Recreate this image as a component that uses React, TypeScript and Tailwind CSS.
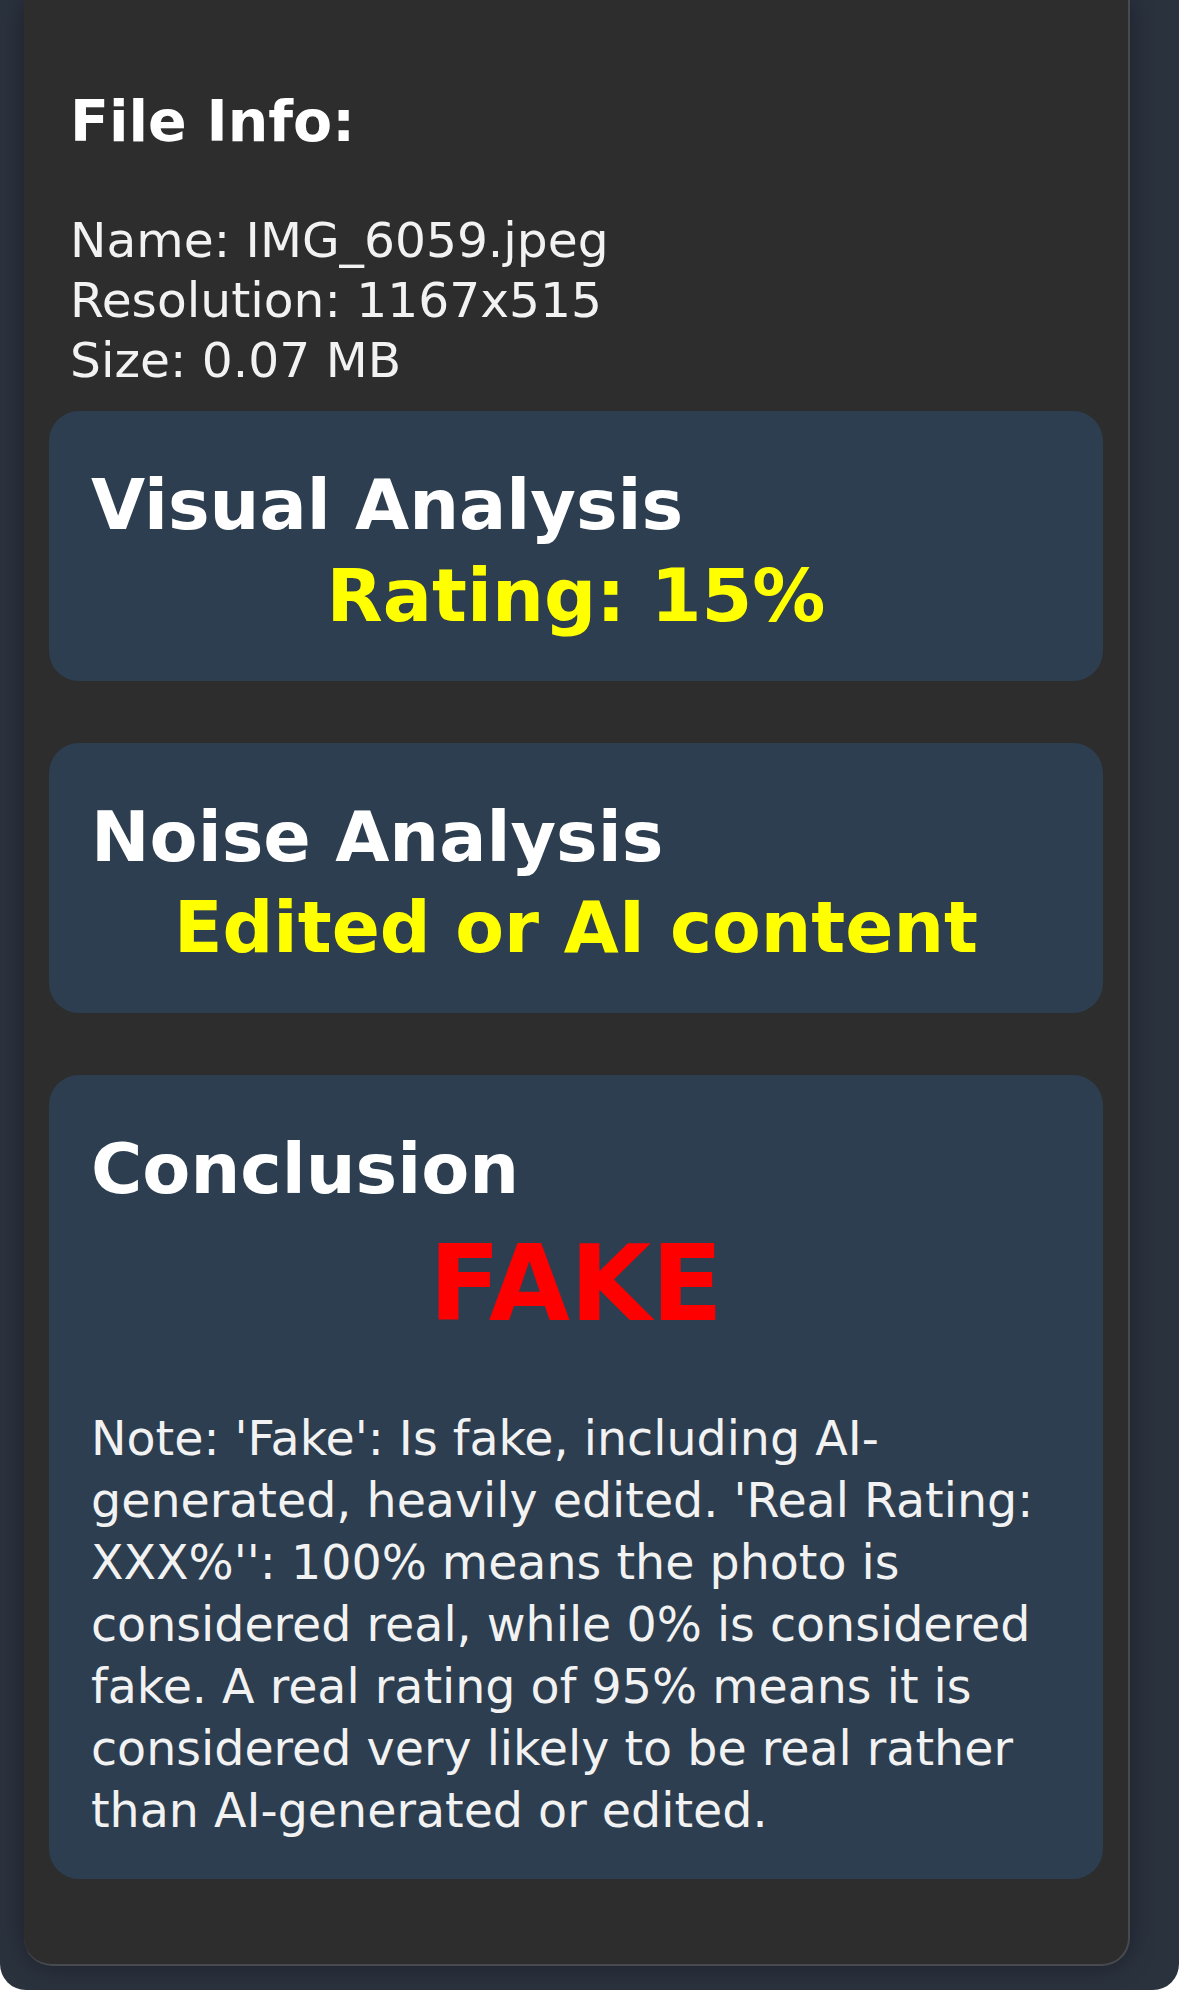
import React from 'react';

interface CardProps {
  title: string;
  children: React.ReactNode;
}

const Card: React.FC<CardProps> = ({ title, children }) => (
  <div className="mx-[25px] rounded-[30px] bg-[#2c3e50] px-[42px] pt-[53px] pb-[44px]">
    <h2 className="text-[70px] font-bold leading-[82px] text-white">{title}</h2>
    {children}
  </div>
);

const App: React.FC = () => {
  return (
    <div
      className="w-[1179px] min-h-[1990px] rounded-b-[26px] bg-[#2a323e] pb-[23px]"
      style={{ fontFamily: '"DejaVu Sans", Verdana, sans-serif' }}
    >
      <div className="ml-[24px] mr-[49px] rounded-b-[28px] border-r-2 border-b-2 border-[#474a4f] bg-[#2d2d2d] pt-[89px] pb-[85px] shadow-[0_0_24px_rgba(0,0,0,0.35)]">
        {/* file info */}
        <div className="px-[46px] pb-[21px] text-[#f2f2f2]">
          <h3 className="text-[57px] font-bold leading-[65px] text-white">File Info:</h3>
          <div className="mt-[56px] text-[48.7px] leading-[60px]">
            <p>Name: IMG_6059.jpeg</p>
            <p>Resolution: 1167x515</p>
            <p>Size: 0.07 MB</p>
          </div>
        </div>

        <div className="flex flex-col gap-[62px]">
          <Card title="Visual Analysis">
            <p className="mt-[9px] text-center text-[73px] font-bold leading-[82px] text-[#ffff00]">
              Rating: 15%
            </p>
          </Card>

          <Card title="Noise Analysis">
            <p className="mt-[9px] text-center text-[71px] font-bold leading-[82px] text-[#ffff00]">
              Edited or AI content
            </p>
          </Card>

          <div className="mx-[25px] rounded-[30px] bg-[#2c3e50] px-[42px] pt-[53px] pb-[37px]">
            <h2 className="text-[70px] font-bold leading-[82px] text-white">Conclusion</h2>
            <p className="mt-[14px] text-center text-[105px] font-bold leading-[120px] text-[#ff0000]">
              FAKE
            </p>
            <p className="mt-[64px] text-[47.5px] leading-[62px] text-[#f2f2f2]">
              Note: 'Fake': Is fake, including AI-generated, heavily edited. 'Real Rating: XXX%'': 100%
              means the photo is considered real, while 0% is considered fake. A real rating of 95%
              means it is considered very likely to be real rather than AI-generated or edited.
            </p>
          </div>
        </div>
      </div>
    </div>
  );
};

export default App;
